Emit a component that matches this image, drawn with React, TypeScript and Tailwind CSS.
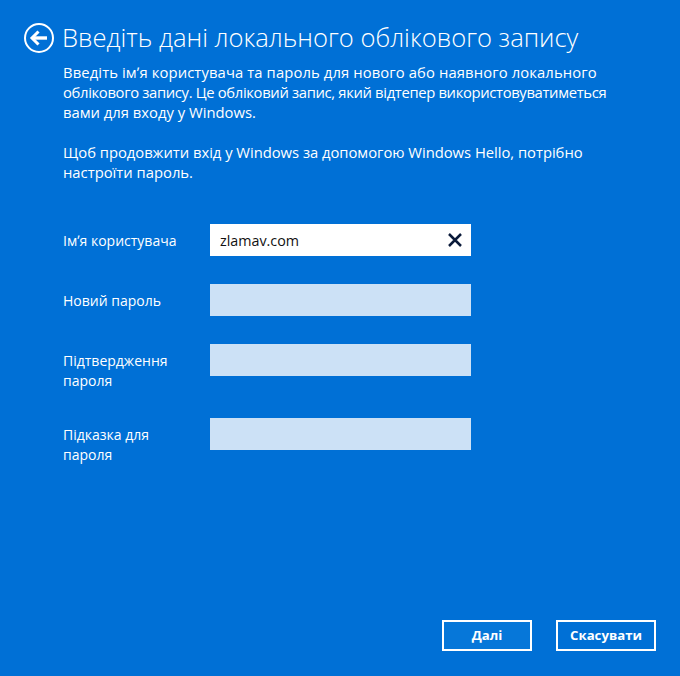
import React from 'react';

function Row({ label, className, filled, children }: { label: React.ReactNode; className?: string; filled?: boolean; children?: React.ReactNode }) {
  return (
    <div className={`flex items-start ${className ?? ''}`}>
      <div className="w-[147px] text-[14px] leading-[20px] text-white pt-[7px]">{label}</div>
      <div className={`w-[261px] h-[32px] flex items-center justify-between ${filled ? 'bg-white' : 'bg-[#cce1f6]'}`}>{children}</div>
    </div>
  );
}

export default function App() {
  return (
    <div className="w-[680px] h-[676px] bg-[#0070d6] relative overflow-hidden text-white font-['Open_Sans','Noto_Sans',sans-serif]">
      <div className="flex items-center pl-[24px] pt-[22px]">
        <svg width="30" height="30" viewBox="0 0 30 30" fill="none">
          <circle cx="15" cy="15" r="14" stroke="white" strokeWidth="2" />
          <path d="M23 15H9" stroke="white" strokeWidth="3.4" />
          <path d="M14.5 8.5L8 15L14.5 21.5" stroke="white" strokeWidth="3" />
        </svg>
        <div className="ml-[8px] text-[25.6px] leading-[32px] font-light whitespace-nowrap">Введіть дані локального облікового запису</div>
      </div>
      <div className="pl-[63px] pt-[8px] text-[14.8px] leading-[20px] whitespace-nowrap">
        <p>
          <span className="block tracking-[0.11px]">Введіть імʼя користувача та пароль для нового або наявного локального</span>
          <span className="block tracking-[-0.34px]">облікового запису. Це обліковий запис, який відтепер використовуватиметься</span>
          <span className="block">вами для входу у Windows.</span>
        </p>
        <p className="mt-[20px]">
          <span className="block tracking-[-0.03px]">Щоб продовжити вхід у Windows за допомогою Windows Hello, потрібно</span>
          <span className="block">настроїти пароль.</span>
        </p>
      </div>
      <div className="pl-[63px] pt-[42px]">
        <Row label="Імʼя користувача" filled>
          <span className="pl-[10px] pt-[2px] text-[14.3px] text-[#111111]">zlamav.com</span>
          <svg className="mr-[8px]" width="16" height="16" viewBox="0 0 16 16" fill="none">
            <path d="M2 2L14 14M14 2L2 14" stroke="#0a1a3a" strokeWidth="2.5" />
          </svg>
        </Row>
        <Row label="Новий пароль" className="mt-[28px]" />
        <Row label={<>Підтвердження<br />пароля</>} className="mt-[28px]" />
        <Row label={<>Підказка для<br />пароля</>} className="mt-[27px]" />
      </div>
      <div className="absolute right-[24px] bottom-[25px] flex gap-[24px]">
        <button className="w-[90px] h-[31px] border-2 border-white bg-[#0677d9] text-[13.2px] font-bold text-white">Далі</button>
        <button className="w-[100px] h-[31px] border-2 border-white text-[13.2px] font-bold text-white">Скасувати</button>
      </div>
    </div>
  );
}
